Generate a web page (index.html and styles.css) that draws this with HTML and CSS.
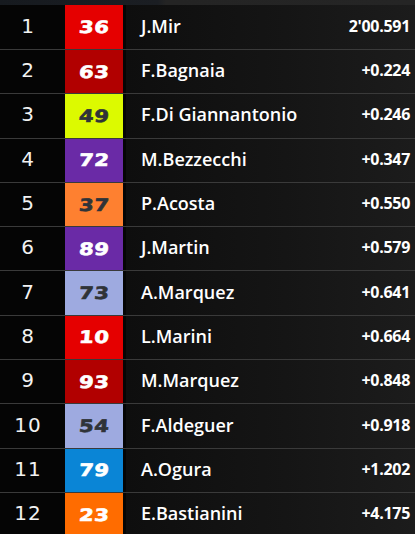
FILE: index.html
```html
<!DOCTYPE html>
<html>
<head>
<meta charset="utf-8">
<link rel="stylesheet" href="styles.css">
</head>
<body>
<div class="board">
  <div class="topbar"></div>
  <div class="row"><div class="pos">1</div><div class="num c-red"><span class="digits">36</span></div><div class="info"><span class="name">J.Mir</span><span class="time">2'00.591</span></div></div>
  <div class="row"><div class="pos">2</div><div class="num c-dred"><span class="digits">63</span></div><div class="info"><span class="name">F.Bagnaia</span><span class="time">+0.224</span></div></div>
  <div class="row"><div class="pos">3</div><div class="num c-yellow dark"><span class="digits">49</span></div><div class="info"><span class="name">F.Di Giannantonio</span><span class="time">+0.246</span></div></div>
  <div class="row"><div class="pos">4</div><div class="num c-purple"><span class="digits">72</span></div><div class="info"><span class="name">M.Bezzecchi</span><span class="time">+0.347</span></div></div>
  <div class="row"><div class="pos">5</div><div class="num c-orange dark"><span class="digits">37</span></div><div class="info"><span class="name">P.Acosta</span><span class="time">+0.550</span></div></div>
  <div class="row"><div class="pos">6</div><div class="num c-purple"><span class="digits">89</span></div><div class="info"><span class="name">J.Martin</span><span class="time">+0.579</span></div></div>
  <div class="row"><div class="pos">7</div><div class="num c-lblue dark"><span class="digits">73</span></div><div class="info"><span class="name">A.Marquez</span><span class="time">+0.641</span></div></div>
  <div class="row"><div class="pos">8</div><div class="num c-red"><span class="digits">10</span></div><div class="info"><span class="name">L.Marini</span><span class="time">+0.664</span></div></div>
  <div class="row"><div class="pos">9</div><div class="num c-dred"><span class="digits">93</span></div><div class="info"><span class="name">M.Marquez</span><span class="time">+0.848</span></div></div>
  <div class="row"><div class="pos">10</div><div class="num c-lblue dark"><span class="digits">54</span></div><div class="info"><span class="name">F.Aldeguer</span><span class="time">+0.918</span></div></div>
  <div class="row"><div class="pos">11</div><div class="num c-blue"><span class="digits">79</span></div><div class="info"><span class="name">A.Ogura</span><span class="time">+1.202</span></div></div>
  <div class="row"><div class="pos">12</div><div class="num c-orange2"><span class="digits">23</span></div><div class="info"><span class="name">E.Bastianini</span><span class="time">+4.175</span></div></div>
</div>
</body>
</html>
```

FILE: styles.css
```css
html, body {
  margin: 0;
  padding: 0;
  background: #050505;
  overflow: hidden;
}
.board {
  width: 415px;
  height: 534px;
  overflow: hidden;
  display: flex;
  flex-direction: column;
  background: #050505;
}
.topbar {
  height: 5px;
  flex: none;
  background: linear-gradient(90deg, #161a1f 0%, #1b1e23 38%, #242424 40%, #252525 100%);
}
.row {
  flex: none;
  height: 44.3px;
  box-sizing: border-box;
  display: flex;
  border-top: 1px solid #3a3a3a;
}
.row:nth-child(2) {
  height: 44px;
  border-top: none;
}
.pos {
  width: 65px;
  flex: none;
  box-sizing: border-box;
  padding-right: 9px;
  padding-bottom: 3px;
  display: flex;
  align-items: center;
  justify-content: center;
  color: #f2f2f2;
  font-family: "DejaVu Sans", sans-serif;
  font-size: 20px;
  font-weight: 400;
  letter-spacing: 1px;
  background: #050505;
}
.num {
  width: 58px;
  flex: none;
  display: flex;
  align-items: center;
  justify-content: center;
  color: #ffffff;
  font-family: "DejaVu Sans", sans-serif;
  font-size: 17px;
  font-weight: 700;
}
.digits {
  display: inline-block;
  transform: scaleX(1.25) skewX(-4deg);
  letter-spacing: 0.5px;
  -webkit-text-stroke: 0.6px currentColor;
}
.num.dark { color: #2f3338; }
.c-red { background: #e50000; }
.c-dred { background: #b10000; }
.c-yellow { background: #dcfa00; }
.c-purple { background: #6a2aa6; }
.c-orange { background: #fe8030; }
.c-lblue { background: #9eaae0; }
.c-blue { background: #0a85d6; }
.c-orange2 { background: #ff6c00; }
.info {
  flex: 1;
  margin-left: 3px;
  display: flex;
  align-items: center;
  justify-content: space-between;
  padding: 0 5px 3px 15px;
  background: linear-gradient(90deg, #0e0e0e 0%, #151515 55%, #1c1c1c 100%);
  color: #ffffff;
}
.name {
  font-family: "Open Sans", sans-serif;
  font-weight: 600;
  font-size: 18px;
}
.time {
  font-family: "Open Sans", sans-serif;
  font-weight: 700;
  font-size: 16px;
  letter-spacing: -0.3px;
}
```
